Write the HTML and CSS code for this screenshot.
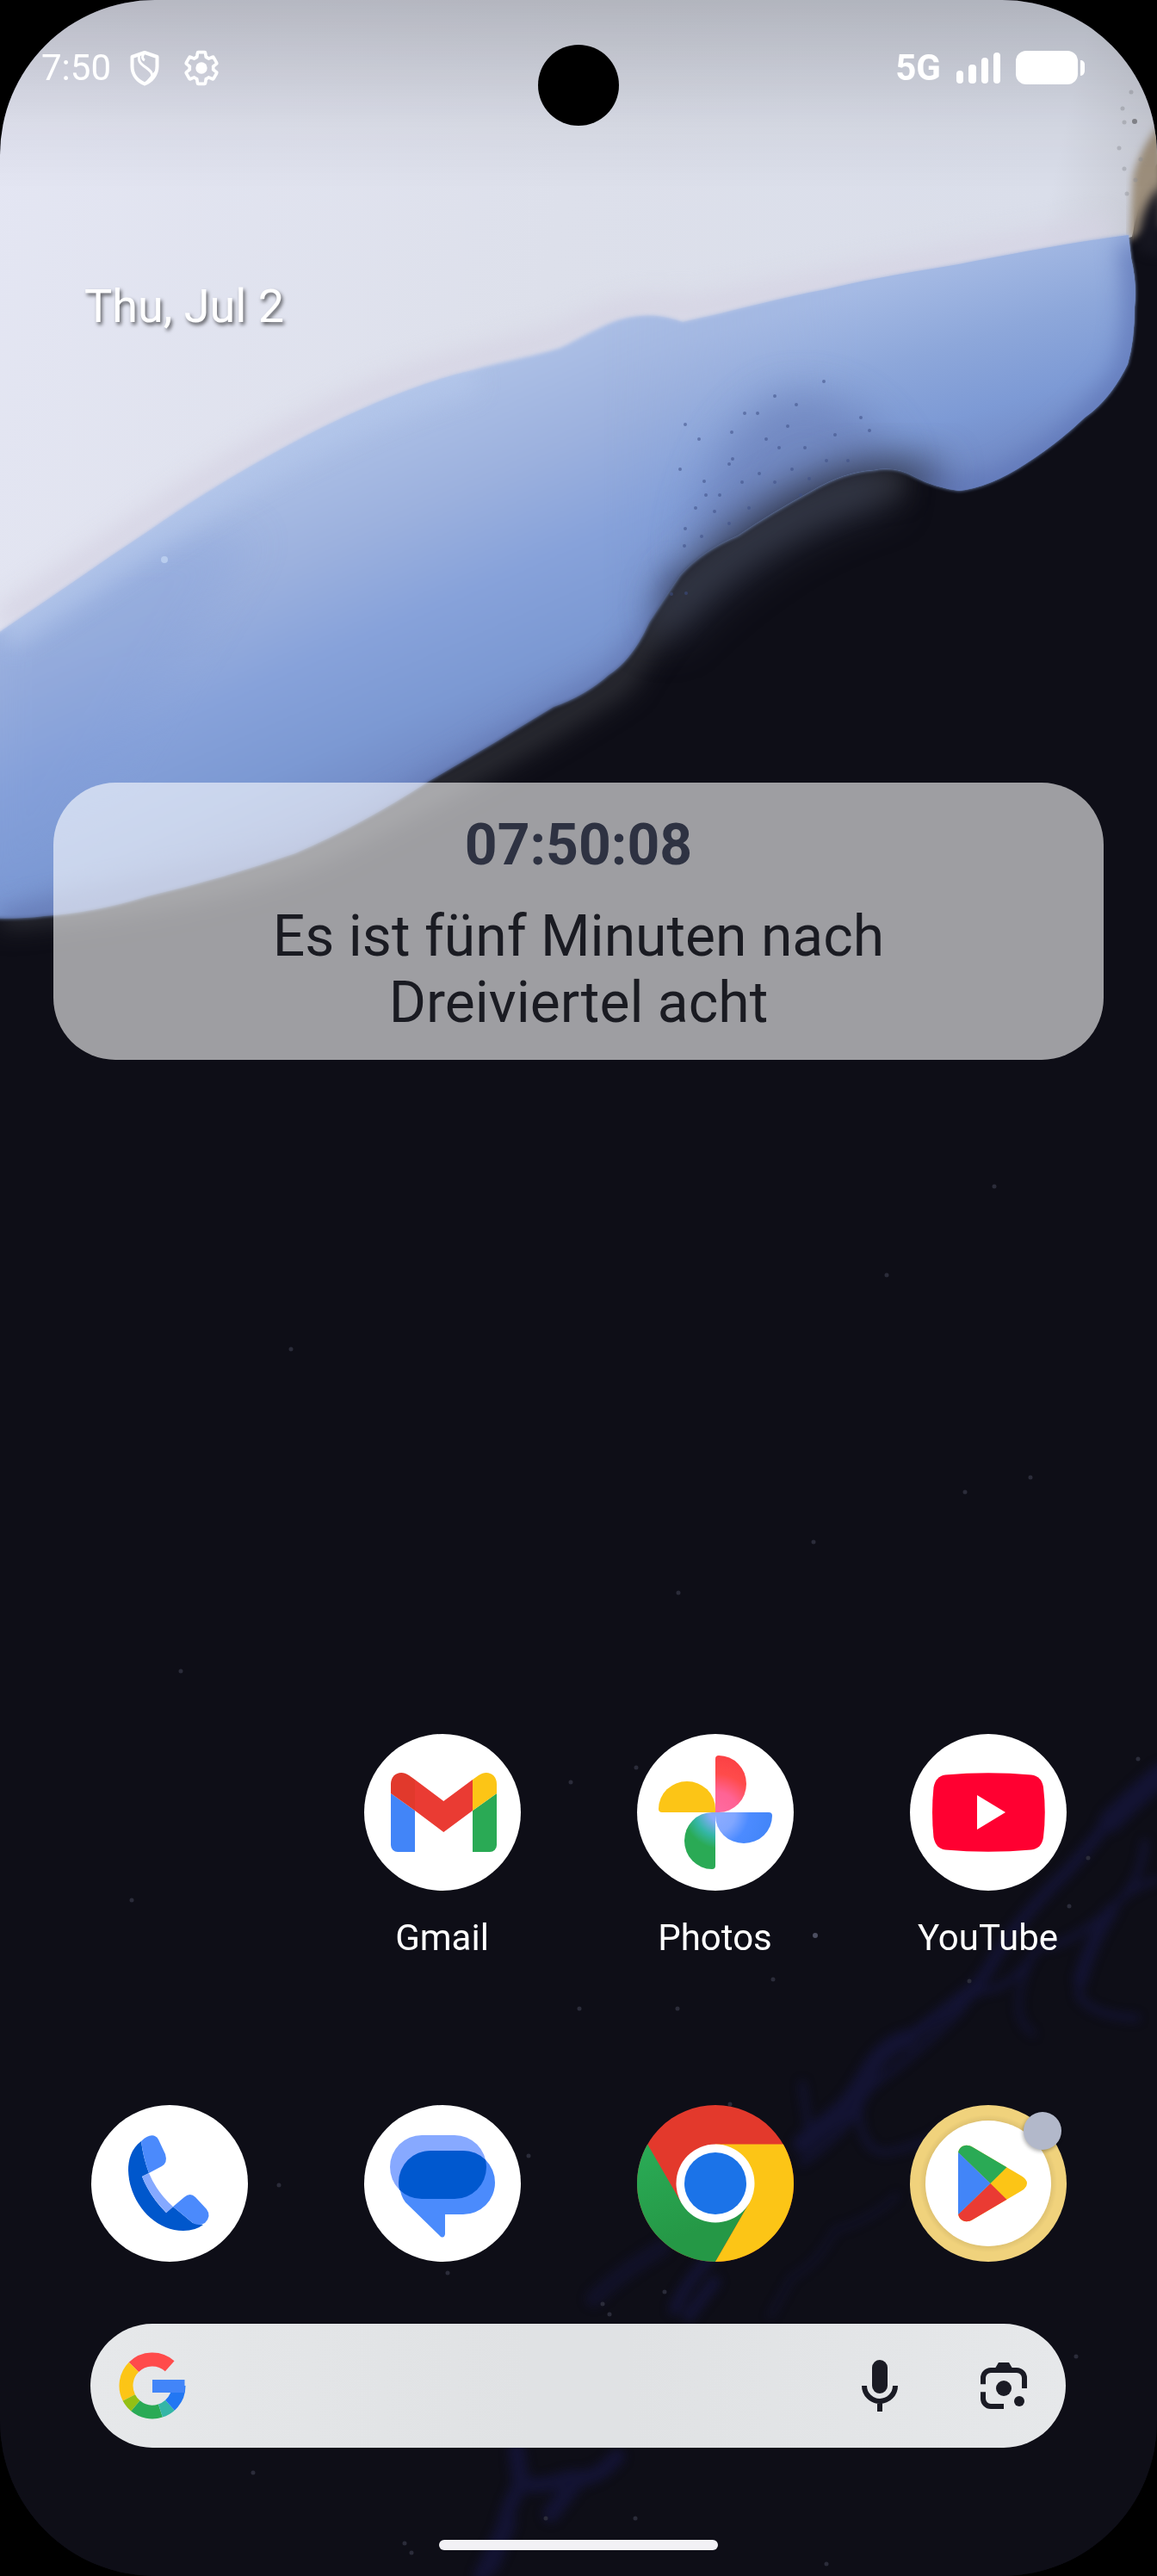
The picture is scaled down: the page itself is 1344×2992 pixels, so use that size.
FILE: index.html
```html
<!DOCTYPE html>
<html lang="en">
<head>
    <meta charset="UTF-8">
    <meta name="viewport" content="width=device-width, initial-scale=1.0">
    <title>Home</title>
    <link rel="stylesheet" href="styles.css">
</head>
<body>

<div class="screen">

    <!-- Wallpaper -->
    <svg class="wallpaper" viewBox="0 0 1344 2992" preserveAspectRatio="xMidYMin slice" aria-hidden="true">
        <defs>
            <linearGradient id="paper" x1="0" y1="0" x2="1344" y2="300" gradientUnits="userSpaceOnUse">
                <stop offset="0" stop-color="#e4e6f3"/>
                <stop offset=".5" stop-color="#dde0eb"/>
                <stop offset=".9" stop-color="#dadeea"/>
                <stop offset="1" stop-color="#c4c6cf"/>
            </linearGradient>
            <linearGradient id="blue" x1="400" y1="480" x2="580" y2="890" gradientUnits="userSpaceOnUse">
                <stop offset="0" stop-color="#afc2e7"/>
                <stop offset=".3" stop-color="#9cb1de"/>
                <stop offset=".55" stop-color="#87a2da"/>
                <stop offset=".78" stop-color="#7c99d3"/>
                <stop offset="1" stop-color="#6e86c2"/>
            </linearGradient>
            <linearGradient id="blueRight" x1="1080" y1="310" x2="1160" y2="570" gradientUnits="userSpaceOnUse">
                <stop offset="0" stop-color="#a5bae4"/>
                <stop offset=".35" stop-color="#8da7da"/>
                <stop offset=".65" stop-color="#7d9ad5"/>
                <stop offset="1" stop-color="#6c83bf"/>
            </linearGradient>
            <linearGradient id="fadeRight" x1="700" y1="0" x2="1000" y2="0" gradientUnits="userSpaceOnUse">
                <stop offset="0" stop-color="#fff" stop-opacity="0"/>
                <stop offset="1" stop-color="#fff"/>
            </linearGradient>
            <linearGradient id="scrim" x1="0" y1="0" x2="0" y2="1">
                <stop offset="0" stop-color="#000" stop-opacity=".19"/>
                <stop offset=".3" stop-color="#000" stop-opacity=".12"/>
                <stop offset=".65" stop-color="#000" stop-opacity=".04"/>
                <stop offset="1" stop-color="#000" stop-opacity="0"/>
            </linearGradient>
            <mask id="rightMask"><rect width="1344" height="1100" fill="url(#fadeRight)"/></mask>
            <clipPath id="waveClip">
                <path id="wave" d="M-20 746L0 734C60 694 115 655 171 618C222 582 275 550 326 522C366 500 405 481 446 464C480 450 515 438 549 430C590 418 620 414 651 404C680 390 705 374 729 369Q760 362 793 374C850 362 905 346 960 336C1010 324 1060 316 1114 307C1180 294 1250 281 1311 273L1314 300Q1321 330 1318 357Q1318 395 1310 423Q1290 464 1260 485Q1230 514 1191 539Q1150 566 1114 570Q1085 566 1063 554Q1040 541 1015 546Q980 548 943 570Q895 596 857 622Q815 640 790 668Q775 690 754 723Q735 766 707 784Q680 808 643 821Q570 866 497 908Q420 958 343 991Q260 1020 171 1041Q110 1060 51 1064Q20 1068 -20 1066Z"/>
            </clipPath>
            <filter id="blur2"><feGaussianBlur stdDeviation="2"/></filter>
            <filter id="blur4"><feGaussianBlur stdDeviation="4"/></filter>
            <filter id="blur8"><feGaussianBlur stdDeviation="6"/></filter>
            <filter id="blur14" x="-30%" y="-30%" width="160%" height="160%"><feGaussianBlur stdDeviation="14"/></filter>
            <filter id="blur28" x="-40%" y="-40%" width="180%" height="180%"><feGaussianBlur stdDeviation="24"/></filter>
        </defs>

        <rect width="1344" height="2992" fill="#0e0e17"/>

        <!-- dusty glow below the wave -->
        <path d="M0 1062Q250 1040 380 980Q600 870 720 790Q790 670 880 620Q980 560 1050 560" fill="none" stroke="#2b2c33" stroke-width="34" filter="url(#blur14)"/>
        <path d="M760 730Q820 665 900 615Q970 575 1030 560" fill="none" stroke="#34394a" stroke-width="44" filter="url(#blur28)"/>

        <!-- paper -->
        <path d="M0 0H1344V190Q1326 220 1315 275L790 420L0 800Z" fill="url(#paper)"/>
        <path d="M1350 140Q1325 170 1316 205L1312 280L1350 260Z" fill="#9d8f7c" filter="url(#blur4)"/>
        <path d="M1350 215Q1325 235 1320 290L1350 300Z" fill="#15151f" filter="url(#blur8)"/>
        <path d="M0 722C60 682 115 643 171 606C222 570 275 538 326 510C366 488 405 469 446 452C500 430 580 412 651 392Q740 345 793 362L1290 265" fill="none" stroke="#d5d3e3" stroke-width="26" filter="url(#blur14)"/>

        <!-- wave -->
        <use href="#wave" fill="url(#blue)" filter="url(#blur2)"/>
        <g clip-path="url(#waveClip)">
            <path d="M-20 620H300L0 1100H-20Z" fill="#7f9bd8" opacity=".3" filter="url(#blur28)"/>
            <g mask="url(#rightMask)"><rect x="640" y="240" width="704" height="700" fill="url(#blueRight)"/></g>
            <path d="M0 734C60 694 115 655 171 618C222 582 275 550 326 522C366 500 405 481 446 464C480 450 515 438 549 430" fill="none" stroke="#b3c6ea" stroke-width="50" opacity=".8" filter="url(#blur14)"/>
            <path d="M1314 280Q1330 380 1305 440Q1250 510 1191 545Q1120 590 1063 556" fill="none" stroke="#6077b8" stroke-width="26" filter="url(#blur14)"/>
            <path d="M790 660Q765 740 707 790L497 914Q420 964 343 997L0 1072" fill="none" stroke="#6479b4" stroke-width="24" filter="url(#blur14)"/>
            <path d="M800 660Q810 520 900 460Q1000 440 1050 545L950 600Z" fill="#6b80b9" opacity=".7" filter="url(#blur28)"/>
            <path d="M780 712Q860 615 950 575Q1010 548 1060 556L960 640Z" fill="#2b3043" stroke="#2b3043" stroke-width="34" filter="url(#blur28)"/>
        </g>

        <!-- specks in the wave -->
        <path d="M796 493h0M812 510h0M847 539h0M818 559h0M820 575h0M851 533h0M882 550h0M796 614h0M847 608h0M830 594h0M905 520h0M940 556h0M960 535h0M1000 485h0M1010 500h0M957 443h0M850 502h0M880 480h0M920 545h0M795 634h0M815 623h0M870 590h0M790 545h0M985 535h0M865 480h0M930 575h0M780 690h0M797 689h0M900 560h0M890 510h0M915 495h0M935 520h0M862 560h0M836 575h0M808 590h0M900 460h0M925 470h0M970 505h0" stroke="#3e4f86" stroke-width="4" stroke-linecap="round" opacity=".55"/>
        <path d="M1318 141h0M1306 142h0M1314 107h0M1304 126h0M1300 172h0M1319 209h0M1306 196h0M1325 185h0M1309 225h0" stroke="#8b8c93" stroke-width="5" stroke-linecap="round" opacity=".4"/>
        <circle cx="1318" cy="141" r="3" fill="#85868d"/>
        <circle cx="191" cy="650" r="4" fill="#b9cdee"/>

        <!-- violet veins -->
        <g fill="none" stroke="#15153a" stroke-linecap="round" opacity=".8" filter="url(#blur8)">
            <path d="M1350 2058Q1300 2100 1284 2120Q1250 2165 1223 2190Q1180 2235 1156 2273Q1140 2305 1120 2317Q1080 2350 1054 2368" stroke-width="14"/>
            <path d="M1350 2060Q1320 2085 1290 2115" stroke-width="26"/>
            <path d="M1344 2183Q1310 2195 1299 2209Q1275 2240 1268 2253Q1255 2280 1253 2318Q1270 2342 1320 2344" stroke-width="8"/>
            <path d="M1290 2220Q1265 2260 1255 2300" stroke-width="16"/>
            <path d="M1330 2140Q1325 2185 1299 2209Q1240 2265 1207 2260Q1180 2305 1151 2311Q1130 2310 1115 2336Q1070 2380 1034 2407Q1000 2430 998 2451Q965 2490 932 2512" stroke-width="8"/>
            <path d="M1204 2262Q1165 2340 1200 2362" stroke-width="6"/>
            <path d="M1054 2368Q1030 2375 1013 2400Q990 2440 978 2451L932 2490" stroke-width="22"/>
            <path d="M932 2420L940 2480M998 2451Q1000 2500 1030 2500Q1080 2490 1100 2470" stroke-width="7"/>
            <path d="M850 2600Q800 2640 784 2682M830 2650L800 2690" stroke-width="14"/>
            <path d="M770 2610Q720 2640 690 2670" stroke-width="20" opacity=".6"/>
            <path d="M1042 2550Q1010 2580 970 2590Q950 2630 920 2645L895 2690" stroke-width="6" opacity=".7"/>
            <path d="M717 2853Q690 2885 660 2878Q630 2890 605 2885Q590 2910 585 2936L559 2992" stroke-width="18"/>
            <path d="M600 2845L605 2885M672 2878L640 2920M590 2930L570 2980" stroke-width="20"/>
        </g>

        <!-- stars -->
        <path d="M338 1567h0M210 1941h0M153 2207h0M1197 1716h0M945 1791h0M788 1850h0M1030 1481h0M1121 1733h0M1155 1378h0M739 2053h0M663 2070h0M1322 2043h0M1264 2158h0M1242 2214h0M1126 2301h0M898 2299h0M673 2333h0M787 2333h0M708 2688h0M700 2676h0M772 2662h0M738 2925h0M1250 2737h0M634 2925h0M478 2965h0M470 2954h0M294 2872h0M520 2640h0M324 2538h0M614 2504h0M848 2444h0M960 2978h0" stroke="#2b2c3a" stroke-width="5" stroke-linecap="round"/>
        <circle cx="947" cy="2248" r="3" fill="#4c4e60"/>

        <rect width="1344" height="220" fill="url(#scrim)"/>
    </svg>

    <div class="camera"></div>

    <header class="status-bar">
        <div class="status-group">
            <time class="clock">7:50</time>
            <svg class="status-icon" viewBox="0 0 42 42" fill="none" stroke="#fff" stroke-width="4" stroke-linejoin="round">
                <path d="M21 3L35.500 8V19C35.500 29 29 36 21 39.500C13 36 6.500 29 6.500 19V8Z"/>
                <path d="M15 5C13 13 16 16 22 20C29 25 30 27 30 32M20 4C17 9 19 11 21 12" stroke-width="3"/>
                <path d="M21 39L31 32L33 25Z" fill="#fff" stroke-width="1"/>
            </svg>
            <svg class="status-icon" viewBox="1 1 22 22">
                <path fill="none" stroke="#fff" stroke-width="1.900" stroke-linejoin="round" d="M19.140 12.940c.04-.3.06-.61.06-.94 0-.32-.02-.64-.07-.94l2.030-1.580c.18-.14.23-.41.12-.61l-1.920-3.320c-.12-.22-.37-.29-.59-.22l-2.390.96c-.5-.38-1.030-.7-1.620-.94l-.36-2.540c-.04-.24-.24-.41-.48-.41h-3.840c-.24 0-.43.17-.47.41l-.36 2.540c-.59.24-1.130.57-1.620.94l-2.390-.96c-.22-.08-.47 0-.59.22L2.740 8.870c-.12.21-.08.47.12.61l2.030 1.580c-.05.3-.09.63-.09.94s.02.64.07.94l-2.030 1.580c-.18.14-.23.41-.12.61l1.920 3.320c.12.22.37.29.59.22l2.390-.96c.5.38 1.030.7 1.620.94l.36 2.540c.05.24.24.41.48.41h3.840c.24 0 .44-.17.47-.41l.36-2.540c.59-.24 1.130-.56 1.620-.94l2.390.96c.22.08.47 0 .59-.22l1.920-3.320c.12-.22.07-.47-.12-.61l-2.010-1.580z"/>
                <circle cx="12" cy="12" r="3.500" fill="#fff"/>
            </svg>
        </div>
        <div class="status-group">
            <span class="network">5G</span>
            <svg class="signal" viewBox="0 0 51 36" fill="#fff">
                <rect x="0" y="21" width="8" height="15" rx="4"/>
                <rect x="14" y="14" width="9" height="22" rx="4"/>
                <rect x="29" y="6" width="8" height="30" rx="4"/>
                <rect x="43" y="0" width="8" height="36" rx="4"/>
            </svg>
            <svg class="battery" viewBox="0 0 80 40" fill="#fff">
                <rect x="0" y="0" width="72" height="39" rx="12"/>
                <path d="M75 11c3 0 5 2 5 5v7c0 3-2 6-5 6z"/>
            </svg>
        </div>
    </header>

    <p class="date">Thu, Jul 2</p>

    <section class="widget">
        <time class="widget-time">07:50:08</time>
        <p class="widget-text">Es ist fünf Minuten nach Dreiviertel acht</p>
    </section>

    <nav class="apps">
        <a class="app app-first" href="#">
            <svg class="app-icon" viewBox="0 0 182 182" aria-hidden="true">
                <circle cx="91" cy="91" r="91" fill="#fff"/>
                <path d="M31 69L59 89V137H39a8 8 0 0 1-8-8Z" fill="#4285f8"/>
                <path d="M154 69L126 89V137h20a8 8 0 0 0 8-8Z" fill="#2aaa55"/>
                <path d="M126 53L133 48C143 41 154 47 154 58V69L126 89Z" fill="#fcc516"/>
                <path d="M59 53L92.300 78L126 53V89L92.300 114L59 89Z" fill="#ea3b33"/>
                <path d="M31 69V58C31 47 42 41 52 48L59 53V89Z" fill="#e1392c"/>
            </svg>
            <span class="app-label">Gmail</span>
        </a>
        <a class="app" href="#">
            <svg class="app-icon" viewBox="0 0 182 182" aria-hidden="true">
                <defs>
                    <radialGradient id="petalRed" cx="91" cy="95" r="70" gradientUnits="userSpaceOnUse">
                        <stop offset=".1" stop-color="#ff6aa0"/>
                        <stop offset=".4" stop-color="#ff6394"/>
                        <stop offset=".7" stop-color="#ff4b4b"/>
                        <stop offset="1" stop-color="#fb4144"/>
                    </radialGradient>
                    <radialGradient id="petalBlue" cx="91" cy="91" r="66" gradientUnits="userSpaceOnUse">
                        <stop offset=".1" stop-color="#8aabff"/>
                        <stop offset=".35" stop-color="#80a6ff"/>
                        <stop offset=".6" stop-color="#4c8bff"/>
                        <stop offset="1" stop-color="#4285f8"/>
                    </radialGradient>
                    <radialGradient id="petalGreen" cx="98" cy="88" r="70" gradientUnits="userSpaceOnUse">
                        <stop offset=".2" stop-color="#8aabff"/>
                        <stop offset=".45" stop-color="#34b6a6"/>
                        <stop offset=".65" stop-color="#2aaa55"/>
                        <stop offset="1" stop-color="#2aaa55"/>
                    </radialGradient>
                </defs>
                <circle cx="91" cy="91" r="91" fill="#fff"/>
                <path d="M91 91V29q0-4 4-4a32 33 0 0 1 0 66z" fill="url(#petalRed)"/>
                <path d="M91 91H29q-4 0-4-4a33 32 0 0 1 66 0z" fill="#fcc516"/>
                <path d="M91 91V153q0 4-4 4a32 33 0 0 1 0-66z" fill="url(#petalGreen)"/>
                <path d="M91 91H153q4 0 4 4a33 32 0 0 1-66 0z" fill="url(#petalBlue)"/>
            </svg>
            <span class="app-label">Photos</span>
        </a>
        <a class="app" href="#">
            <svg class="app-icon" viewBox="0 0 182 182" aria-hidden="true">
                <circle cx="91" cy="91" r="91" fill="#fff"/>
                <path d="M41 47.500Q91 43 141 47.500Q153 49 155 62Q158.500 91 155 120Q153 133 141 134.500Q91 139 41 134.500Q30 133 27.500 120Q24.500 91 27.500 62Q30 49 41 47.500Z" fill="#ff0031"/>
                <path d="M78 71V111L111 91Z" fill="#fff"/>
            </svg>
            <span class="app-label">YouTube</span>
        </a>
    </nav>

    <nav class="dock">
        <a class="app" href="#" aria-label="Phone">
            <svg class="app-icon" viewBox="0 0 182 182" aria-hidden="true">
                <circle cx="91" cy="91" r="91" fill="#fff"/>
                <path d="M58 42C46 51 43 64 43 76C44 112 72 146 107 146Q121 146 130 139L118 137L95 118L87 125Q68 106 59 83L67 79Q60 60 58 42Z" fill="#0057cc"/>
                <path d="M59 83L67 79Q76 101 95 118L87.500 125Q68 106 59 83Z" fill="#85a9ff"/>
                <path d="M58 42C66 34 74 33 78 40L86 57Q89 67 82 71L67 79Q60 60 58 42Z" fill="#4b8afc"/>
                <path d="M95 118L108 107Q115 101 121 107L134 121Q140 129 132 137Q125 141 118 137Z" fill="#4b8afc"/>
            </svg>
        </a>
        <a class="app" href="#" aria-label="Messages">
            <svg class="app-icon" viewBox="0 0 182 182" aria-hidden="true">
                <defs>
                    <clipPath id="backBubble"><rect x="30" y="35" width="112" height="74" rx="37"/></clipPath>
                </defs>
                <circle cx="91" cy="91" r="91" fill="#fff"/>
                <rect x="30" y="35" width="112" height="74" rx="37" fill="#87a9ff"/>
                <path d="M77 53H115a37 37 0 0 1 0 74H94V150q-1 5-5 3L48 113C35 97 38 55 77 53Z" fill="#4b8bfc"/>
                <rect x="40" y="53" width="112" height="74" rx="37" fill="#0058cf" clip-path="url(#backBubble)"/>
            </svg>
        </a>
        <a class="app" href="#" aria-label="Chrome">
            <svg class="app-icon" viewBox="0 0 182 182" aria-hidden="true">
                <defs>
                    <linearGradient id="chromeGreen" x1="20" y1="50" x2="60" y2="150" gradientUnits="userSpaceOnUse">
                        <stop offset="0" stop-color="#2aaa55"/>
                        <stop offset="1" stop-color="#259846"/>
                    </linearGradient>
                </defs>
                <circle cx="91" cy="91" r="91" fill="#e3392c"/>
                <path d="M12.200 45.500L51.600 113.700L91 91L130.400 113.700L91 182A91 91 0 0 1 12.200 45.500Z" fill="url(#chromeGreen)"/>
                <path d="M91 45.500H169.800A91 91 0 0 1 91 182L130.400 113.700L91 91Z" fill="#fcc516"/>
                <circle cx="91" cy="91" r="45.500" fill="#fff"/>
                <circle cx="91" cy="91" r="36" fill="#1b73e8"/>
            </svg>
        </a>
        <a class="app" href="#" aria-label="Play Store">
            <svg class="app-icon" viewBox="0 0 182 182" aria-hidden="true">
                <defs>
                    <radialGradient id="ring" cx="91" cy="91" r="91" gradientUnits="userSpaceOnUse">
                        <stop offset=".8" stop-color="#dfc271"/>
                        <stop offset=".88" stop-color="#f0d27c"/>
                    </radialGradient>
                    <clipPath id="playShape">
                        <path d="M56 57C56 48 65 44 73 49L129 82Q136 86 136 91Q136 96 129 100L73 133C65 138 56 134 56 125Z"/>
                    </clipPath>
                </defs>
                <circle cx="91" cy="91" r="91" fill="url(#ring)"/>
                <circle cx="91" cy="91" r="73" fill="#fff"/>
                <g clip-path="url(#playShape)">
                    <path d="M50 40H150V140H50Z" fill="#fcc516"/>
                    <path d="M56 55L56 40H145L93.500 91Z" fill="#2aaa55"/>
                    <path d="M56 127V142H145L93.500 91Z" fill="#ea3b33"/>
                    <path d="M50 49L93.500 91L50 133Z" fill="#4285f8"/>
                </g>
            </svg>
            <span class="badge"></span>
        </a>
    </nav>

    <form class="search">
        <svg class="google" viewBox="0 0 78 78" fill="none" stroke-width="16" aria-hidden="true">
            <path d="M59.200 16.200A30.500 30.500 0 0 0 17.400 17.400" stroke="#ff4b4b"/>
            <path d="M17.400 17.400A30.500 30.500 0 0 0 11.800 52.800" stroke="#fcc516"/>
            <path d="M11.800 52.800A30.500 30.500 0 0 0 19.400 62.400" stroke="#94c015"/>
            <path d="M19.400 62.400A30.500 30.500 0 0 0 48.400 68" stroke="#2aaa55"/>
            <path d="M48.400 68A30.500 30.500 0 0 0 59.400 61.700" stroke="#34b6a6"/>
            <path d="M59.400 61.700A30.500 30.500 0 0 0 69.500 39" stroke="#2277f3"/>
            <path d="M39 39.500H76.500" stroke="#4285f8" stroke-width="15"/>
        </svg>
        <input class="search-input" type="text" aria-label="Search">
        <button class="search-button" type="button" aria-label="Voice search">
            <svg viewBox="0 0 24 24" aria-hidden="true">
                <rect x="9" y="2" width="6" height="13" rx="3" fill="#1a1b24"/>
                <path d="M6 12a6 6 0 0 0 12 0M12 18v4" fill="none" stroke="#1a1b24" stroke-width="2"/>
            </svg>
        </button>
        <button class="search-button" type="button" aria-label="Lens">
            <svg viewBox="0 0 24 24" aria-hidden="true">
                <path d="M4 11.400V9a3 3 0 0 1 3-3H17a3 3 0 0 1 3 3V13M4 14.400V17a3 3 0 0 0 3 3H12" fill="none" stroke="#1a1b24" stroke-width="2"/>
                <path d="M8.500 5.500L10 3H14L15.500 5.500Z" fill="#1a1b24"/>
                <circle cx="12" cy="13" r="3" fill="#1a1b24"/>
                <circle cx="18" cy="18" r="2" fill="#1a1b24"/>
            </svg>
        </button>
    </form>

    <div class="handle"></div>
</div>

</body>
</html>
```

FILE: styles.css
```css
/* Base Styles */
* {
    box-sizing: border-box;
}
body {
    margin: 0;
    background: #000;
    font-family: Roboto, "Noto Sans", sans-serif;
    color: #fff;
}
p {
    margin: 0;
}
svg {
    display: block;
}
.screen {
    position: relative;
    display: flex;
    flex-direction: column;
    min-height: 100vh;
    border-radius: 180px;
    overflow: hidden;
    background: #0e0e17;
    isolation: isolate;
}
.wallpaper {
    position: absolute;
    inset: 0;
    width: 100%;
    height: 100%;
    z-index: -1;
    color-interpolation-filters: sRGB;
}
.camera {
    position: absolute;
    top: 52px;
    left: 50%;
    width: 94px;
    height: 94px;
    border-radius: 50%;
    background: #000;
    transform: translateX(-50%);
}

/* Status bar */
.status-bar {
    display: flex;
    justify-content: space-between;
    align-items: center;
    height: 158px;
    padding: 0 84px 0 48px;
}
.status-group {
    display: flex;
    align-items: center;
    gap: 18px;
}
.clock {
    font-size: 42px;
    line-height: 50px;
}
.status-icon {
    width: 42px;
    height: 42px;
}
.status-icon + .status-icon {
    margin-left: 6px;
}
.network {
    font-size: 42px;
    font-weight: 700;
    line-height: 50px;
}
.signal {
    width: 51px;
    height: 36px;
}
.battery {
    width: 80px;
    height: 40px;
}

/* Date and clock widget */
.date {
    margin-top: 166px;
    padding: 0 98px;
    font-size: 54px;
    line-height: 64px;
    text-shadow: 2px 3px 4px rgba(0, 0, 0, 0.6);
}
.widget {
    margin: 521px 62px 0;
    padding: 34px 200px 28px;
    border-radius: 72px;
    background: rgba(255, 255, 255, 0.6);
    font-size: 66px;
    line-height: 77px;
    text-align: center;
}
.widget-time {
    display: block;
    margin-bottom: 29px;
    font-weight: 700;
    color: #2e3242;
}
.widget-text {
    color: #1a1b22;
}

/* Apps */
.apps,
.dock {
    display: grid;
    grid-template-columns: repeat(4, 1fr);
    padding: 0 38px;
}
.apps {
    margin-top: auto;
}
.dock {
    margin-top: 169px;
}
.app {
    position: relative;
    display: flex;
    flex-direction: column;
    align-items: center;
    gap: 30px;
    color: #fff;
    text-decoration: none;
}
.app-first {
    grid-column-start: 2;
}
.app-icon {
    width: 182px;
    height: 182px;
}
.app-label {
    font-size: 42px;
    line-height: 50px;
}
.badge {
    position: absolute;
    top: 8px;
    left: 50%;
    width: 44px;
    height: 44px;
    margin-left: 41px;
    border-radius: 50%;
    background: #b2b8ca;
    box-shadow: -1px 2px 4px rgba(0, 0, 0, 0.3);
}

/* Search */
.search {
    display: flex;
    align-items: center;
    gap: 72px;
    height: 144px;
    margin: 72px 106px 0 105px;
    padding: 0 36px 0 33px;
    border-radius: 72px;
    background: linear-gradient(90deg, #e6e8ea, #e0e2e4 45%, #e0e2e4 55%, #e6e8ea);
}
.google {
    width: 78px;
    height: 78px;
}
.search-input {
    flex: 1;
    min-width: 0;
    height: 100%;
    border: none;
    outline: none;
    background: none;
    font-size: 42px;
}
.search-button {
    width: 72px;
    height: 72px;
    padding: 0;
    border: none;
    background: none;
}
.handle {
    width: 324px;
    height: 12px;
    margin: 107px auto 30px;
    border-radius: 6px;
    background: #f2f1f5;
}
```
